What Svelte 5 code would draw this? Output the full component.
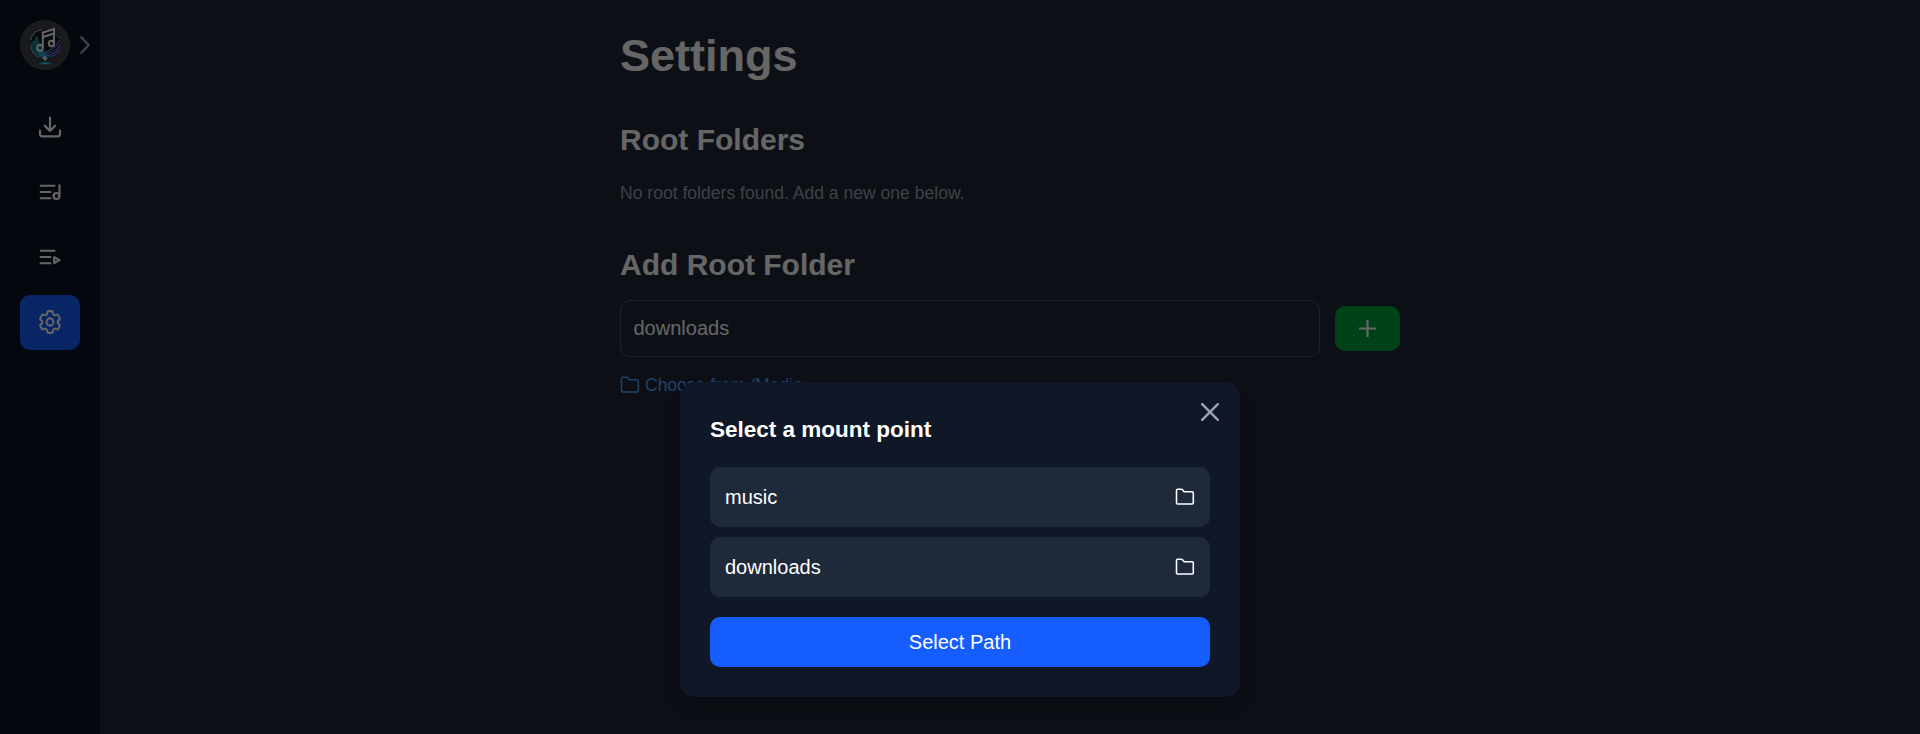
<script>
  let path = $state('downloads');
  const mounts = ['music', 'downloads'];
</script>

{#snippet folder(size)}
  <svg width={size} height={size} viewBox="0 0 20 20" fill="none" stroke="currentColor" stroke-width="1.55" stroke-linejoin="round">
    <path d="M1.5 3.3Q1.5 2.3 2.5 2.3H6.5Q7.2 2.3 7.7 2.9L8.8 4.2Q9.2 4.8 9.9 4.8H17.3Q18.3 4.8 18.3 5.8V15.9Q18.3 16.9 17.3 16.9H2.5Q1.5 16.9 1.5 15.9Z" />
  </svg>
{/snippet}

<div class="page">
  <aside>
    <div class="brand">
      <svg class="logo" width="50" height="50" viewBox="0 0 50 50" fill="none">
        <defs>
          <radialGradient id="disc"><stop offset="0" stop-color="#30333c" /><stop offset=".6" stop-color="#3c3e45" /><stop offset="1" stop-color="#46474c" /></radialGradient>
          <linearGradient id="teal" x1="0" y1="14" x2="0" y2="38" gradientUnits="userSpaceOnUse"><stop stop-color="#1fa5a0" /><stop offset="1" stop-color="#1b7f98" /></linearGradient>
          <linearGradient id="wave" x1="14" y1="0" x2="41" y2="0" gradientUnits="userSpaceOnUse"><stop stop-color="#2ee0e0" /><stop offset=".45" stop-color="#3fa8ea" /><stop offset="1" stop-color="#9b52f0" /></linearGradient>
          <radialGradient id="glow"><stop stop-color="#7af6ff" /><stop offset=".4" stop-color="#18b6cf" /><stop offset="1" stop-color="#168599" stop-opacity="0" /></radialGradient>
        </defs>
        <circle cx="25" cy="25" r="25" fill="url(#disc)" />
        <circle cx="25.5" cy="24.3" r="15" fill="#151a26" />
        <path d="M10.8 23L12.5 21L14 22L15.2 18L16.5 15.5L18 18L19 22L21 23V30L27 34L24 38Q18 38.5 14 34Q10.5 30 10.8 23Z" fill="url(#teal)" opacity=".85" />
        <path d="M17 31.5Q31 35 40 20M18 33.5Q33 36.5 40.7 23.5M19 35.5Q34 38 40.5 27M21 37.5Q34 39 39.5 30.5" stroke="url(#wave)" stroke-width="1.2" />
        <path d="M35 14.5H37M37 16.5H39M38 18H41" stroke="#268d9a" stroke-width="1" />
        <path d="M10.7 20Q12 11 22.5 9.5M10.6 26Q12 34 19 37.5" stroke="#a9b3b8" stroke-width="1" />
        <path d="M22.8 28V12.5L34 9V23.5M23 17L34 13.5" stroke="#fff" stroke-width="1.9" />
        <circle cx="20" cy="27.8" r="2.9" stroke="#fff" stroke-width="1.9" />
        <circle cx="31.4" cy="23.5" r="2.7" stroke="#fff" stroke-width="1.9" />
        <path d="M23.7 36H26.3V38H28L25 41L22 38H23.7Z" fill="#dbe3e5" />
        <ellipse cx="25" cy="43.3" rx="9" ry="1.8" fill="url(#glow)" />
      </svg>
      <svg class="chevron" width="10" height="19" viewBox="0 0 10 19" fill="none" stroke="currentColor" stroke-width="2.4" stroke-linecap="round" stroke-linejoin="round"><path d="M1.3 1.3L8.7 9L1.3 16.8" /></svg>
    </div>
    <nav>
      <a href="#downloads" aria-label="Downloads">
        <svg width="25" height="25" viewBox="0 0 24 24"><path d="M2.4 15.5v3.25A2.25 2.25 0 0 0 4.65 21h14.7A2.25 2.25 0 0 0 21.6 18.75V15.5M17 10.8L12 15.8 7 10.8M12 15.8V3" /></svg>
      </a>
      <a href="#music" aria-label="Music">
        <svg width="25" height="25" viewBox="0 0 25 25"><path d="M3.2 6.3H17M3.2 12.5H12.9M3.2 18.7H12.9M22 5.8V16.5" /><circle cx="19" cy="16.5" r="3" /></svg>
      </a>
      <a href="#playlists" aria-label="Playlists">
        <svg width="25" height="25" viewBox="0 0 25 25"><path d="M3.2 6.3H17M3.2 12.5H12.9M3.2 18.7H12.9M16.7 12.6V18.7L22 15.6Z" /></svg>
      </a>
      <a class="active" href="#settings" aria-label="Settings">
        <svg width="25" height="25" viewBox="0 0 24 24"><g transform="translate(12 12) scale(1.1 1.16) translate(-12 -12)"><path d="M9.594 3.94c.09-.542.56-.94 1.11-.94h2.593c.55 0 1.02.398 1.11.94l.213 1.281c.063.374.313.686.645.87.074.04.147.083.22.127.325.196.72.257 1.075.124l1.217-.456a1.125 1.125 0 0 1 1.37.49l1.296 2.247a1.125 1.125 0 0 1-.26 1.431l-1.003.827c-.293.241-.438.613-.43.992a7.723 7.723 0 0 1 0 .255c-.008.378.137.75.43.991l1.004.827c.424.35.534.955.26 1.43l-1.298 2.247a1.125 1.125 0 0 1-1.369.491l-1.217-.456c-.355-.133-.75-.072-1.076.124a6.47 6.47 0 0 1-.22.128c-.331.183-.581.495-.644.869l-.213 1.281c-.09.543-.56.94-1.11.94h-2.594c-.55 0-1.019-.398-1.11-.94l-.213-1.281c-.062-.374-.312-.686-.644-.87a6.52 6.52 0 0 1-.22-.127c-.325-.196-.72-.257-1.076-.124l-1.217.456a1.125 1.125 0 0 1-1.369-.49l-1.297-2.247a1.125 1.125 0 0 1 .26-1.431l1.004-.827c.292-.24.437-.613.43-.991a6.932 6.932 0 0 1 0-.255c.007-.38-.138-.751-.43-.992l-1.004-.827a1.125 1.125 0 0 1-.26-1.43l1.297-2.247a1.125 1.125 0 0 1 1.37-.491l1.216.456c.356.133.751.072 1.076-.124.072-.044.146-.086.22-.128.332-.183.582-.495.644-.869z" /><circle cx="12" cy="12" r="3" /></g></svg>
      </a>
    </nav>
  </aside>
  <main>
    <h1>Settings</h1>
    <h2>Root Folders</h2>
    <p>No root folders found. Add a new one below.</p>
    <h2 class="add-title">Add Root Folder</h2>
    <div class="add-row">
      <input bind:value={path} aria-label="Folder path" />
      <button class="plus" aria-label="Add folder"><svg width="17" height="17" viewBox="0 0 17 17" stroke="currentColor" stroke-width="2.2"><path d="M0 8.5H17M8.5 0V17" /></svg></button>
    </div>
    <button class="choose">{@render folder(20)}<span>Choose from /Media</span></button>
  </main>
</div>

<div class="overlay">
  <div class="modal" role="dialog" aria-modal="true" aria-labelledby="mount-title">
    <button class="close" aria-label="Close"><svg width="18" height="18" viewBox="0 0 18 18" stroke="currentColor" stroke-width="2.5" stroke-linecap="round"><path d="M1.2 1.2L16.8 16.8M16.8 1.2L1.2 16.8" /></svg></button>
    <h3 id="mount-title">Select a mount point</h3>
    <div class="mounts">
      {#each mounts as mount}
        <button class="mount"><span>{mount}</span>{@render folder(20)}</button>
      {/each}
    </div>
    <button class="select">Select Path</button>
  </div>
</div>

<style>
  :global(body) { background: #1e2937; font-family: "Liberation Sans", Arial, sans-serif; overflow: hidden; }
  :global(*) { box-sizing: border-box; }
  button { border: 0; background: none; color: inherit; font: inherit; padding: 0; cursor: pointer; }
  svg { display: block; flex: none; }
  .page { display: flex; height: 734px; background: #1e2937; color: #fff; }
  aside { width: 100px; flex: none; padding: 20px; background: #0c1324; }
  .brand { display: flex; align-items: center; gap: 10px; height: 50px; }
  .chevron { color: #99a1af; }
  nav { display: flex; flex-direction: column; gap: 10px; margin-top: 30px; }
  nav a { display: flex; align-items: center; justify-content: center; height: 55px; border-radius: 10px; color: #fff; }
  nav a.active { background: #155dfc; }
  nav svg { fill: none; stroke: currentColor; stroke-width: 2.1; stroke-linecap: round; stroke-linejoin: round; transform: translate(-.5px, -.5px); overflow: visible; }
  nav a.active svg { stroke-width: 1.7; }
  main { width: 780px; margin-left: 520px; padding-top: 31px; }
  h1, h2, h3, p { margin: 0; }
  h1 { font-size: 45px; line-height: 50px; }
  h2 { font-size: 30px; line-height: 40px; margin-top: 39px; }
  p { margin-top: 21px; font-size: 17.5px; line-height: 25px; letter-spacing: .025px; color: #99a1af; }
  .add-row { display: flex; align-items: center; gap: 15px; margin-top: 15px; }
  input { flex: 1; min-width: 0; height: 57px; padding: 0 12.5px; border: 1px solid #4a5565; border-radius: 10px; background: transparent; color: #fff; font: 20px "Liberation Sans", Arial, sans-serif; outline: none; }
  .plus { display: flex; align-items: center; justify-content: center; width: 65px; height: 45px; border-radius: 10px; background: #00a63e; }
  .choose { display: flex; align-items: center; gap: 5px; margin-top: 15px; height: 26px; font-size: 17.5px; color: #51a2ff; }
  .overlay { position: absolute; inset: 0; height: 734px; padding-top: 382px; background: rgba(0, 0, 0, .6); }
  .modal { position: relative; width: 560px; margin: 0 auto; padding: 30px; border-radius: 15px; background: #101828; color: #fff; box-shadow: 0 12px 18px -4px rgba(0, 0, 0, .2); }
  .close { position: absolute; top: 21px; right: 21px; color: #99a1af; }
  h3 { font-size: 22.5px; line-height: 35px; }
  .mounts { display: flex; flex-direction: column; gap: 10px; margin-top: 20px; }
  .mount { display: flex; align-items: center; justify-content: space-between; height: 60px; padding: 0 15px; border-radius: 10px; background: #1e2939; font-size: 20px; }
  .select { display: block; width: 100%; height: 50px; margin-top: 20px; border-radius: 10px; background: #155dfc; font-size: 20px; }
</style>
